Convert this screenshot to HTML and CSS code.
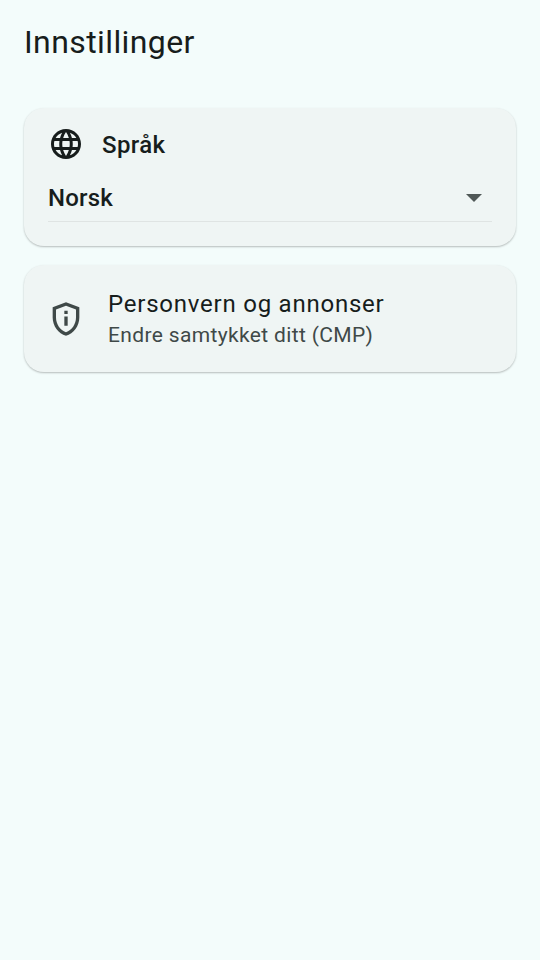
FILE: index.html
```html
<!DOCTYPE html>
<html lang="nb">
<head>
  <meta charset="UTF-8" />
  <meta name="viewport" content="width=device-width, initial-scale=1" />
  <title>Innstillinger</title>
  <link rel="stylesheet" href="styles.css">
</head>
<body>

  <h1 class="page-title">Innstillinger</h1>

  <section class="card language-card">
    <div class="language-head">
      <svg class="globe-icon" viewBox="0 0 24 24">
        <path d="M11.99 2C6.47 2 2 6.48 2 12s4.47 10 9.99 10C17.52 22 22 17.52 22 12S17.52 2 11.99 2zm6.93 6h-2.95c-.32-1.25-.78-2.45-1.38-3.56 1.84.63 3.37 1.91 4.33 3.56zM12 4.04c.83 1.2 1.48 2.53 1.91 3.96h-3.82c.43-1.43 1.08-2.76 1.91-3.96zM4.26 14C4.1 13.36 4 12.69 4 12s.1-1.36.26-2h3.38c-.08.66-.14 1.32-.14 2s.06 1.34.14 2H4.26zm.82 2h2.95c.32 1.25.78 2.45 1.38 3.56-1.84-.63-3.37-1.9-4.33-3.56zm2.95-8H5.08c.96-1.66 2.49-2.93 4.33-3.56C8.81 5.55 8.35 6.75 8.03 8zM12 19.96c-.83-1.2-1.48-2.53-1.91-3.96h3.82c-.43 1.43-1.08 2.76-1.91 3.96zM14.34 14H9.66c-.09-.66-.16-1.32-.16-2s.07-1.35.16-2h4.68c.09.65.16 1.32.16 2s-.07 1.34-.16 2zm.25 5.56c.6-1.11 1.06-2.31 1.38-3.56h2.95c-.96 1.65-2.49 2.93-4.33 3.56zM16.36 14c.08-.66.14-1.32.14-2s-.06-1.34-.14-2h3.38c.16.64.26 1.31.26 2s-.1 1.36-.26 2h-3.38z"/>
      </svg>
      <span class="language-label">Språk</span>
    </div>
    <div class="select-row">
      <span class="select-value">Norsk</span>
      <span class="select-arrow"></span>
    </div>
  </section>

  <section class="card privacy-card">
    <svg class="shield-icon" viewBox="0 0 24 24">
      <path d="M12 2 4 5v6.09c0 5.05 3.41 9.76 8 10.91 4.59-1.15 8-5.86 8-10.91V5l-8-3zm6 9.09c0 4-2.55 7.7-6 8.83-3.45-1.13-6-4.82-6-8.83V6.31l6-2.25 6 2.25v4.78z"/>
      <path d="M11 7h2v2h-2zM11 10.5h2V16h-2z"/>
    </svg>
    <div class="privacy-text">
      <div class="privacy-title">Personvern og annonser</div>
      <div class="privacy-sub">Endre samtykket ditt (CMP)</div>
    </div>
  </section>

</body>
</html>
```

FILE: styles.css
```css
* {
  box-sizing: border-box;
}

body {
  margin: 0;
  padding: 23px 24px 0;
  min-height: 100vh;
  background-color: #f3fcfb;
  color: #171d1c;
  font-family: Roboto, sans-serif;
}

.page-title {
  margin: 0 0 47px;
  font-size: 32px;
  line-height: 38px;
  font-weight: 400;
  letter-spacing: 0.4px;
}

.card {
  background-color: #eff5f4;
  border-radius: 20px;
  box-shadow: 0 1px 2px rgba(0, 0, 0, 0.25);
}

.language-card {
  height: 138px;
  padding: 16px 24px 0;
  margin-bottom: 19px;
}

.language-head {
  display: flex;
  align-items: center;
  gap: 18px;
  height: 40px;
}

.globe-icon {
  width: 36px;
  height: 36px;
  fill: #171d1c;
}

.language-label {
  padding-top: 2px;
  font-size: 24px;
  letter-spacing: 0.4px;
  font-weight: 500;
}

.select-row {
  display: flex;
  align-items: center;
  justify-content: space-between;
  height: 58px;
  padding-top: 11px;
  padding-right: 10px;
  border-bottom: 1px solid #dfe4e3;
}

.select-value {
  font-size: 24px;
  letter-spacing: 0.2px;
  font-weight: 500;
}

.select-arrow {
  width: 0;
  height: 0;
  border-left: 8px solid transparent;
  border-right: 8px solid transparent;
  border-top: 8px solid #505857;
}

.privacy-card {
  display: flex;
  align-items: center;
  gap: 22px;
  height: 107px;
  padding: 0 22px;
}

.shield-icon {
  width: 40px;
  height: 40px;
  fill: #3f4948;
}

.privacy-title {
  font-size: 24px;
  line-height: 32px;
  letter-spacing: 0.77px;
}

.privacy-sub {
  font-size: 21px;
  line-height: 30px;
  letter-spacing: 0.35px;
  color: #3f4948;
}
```
